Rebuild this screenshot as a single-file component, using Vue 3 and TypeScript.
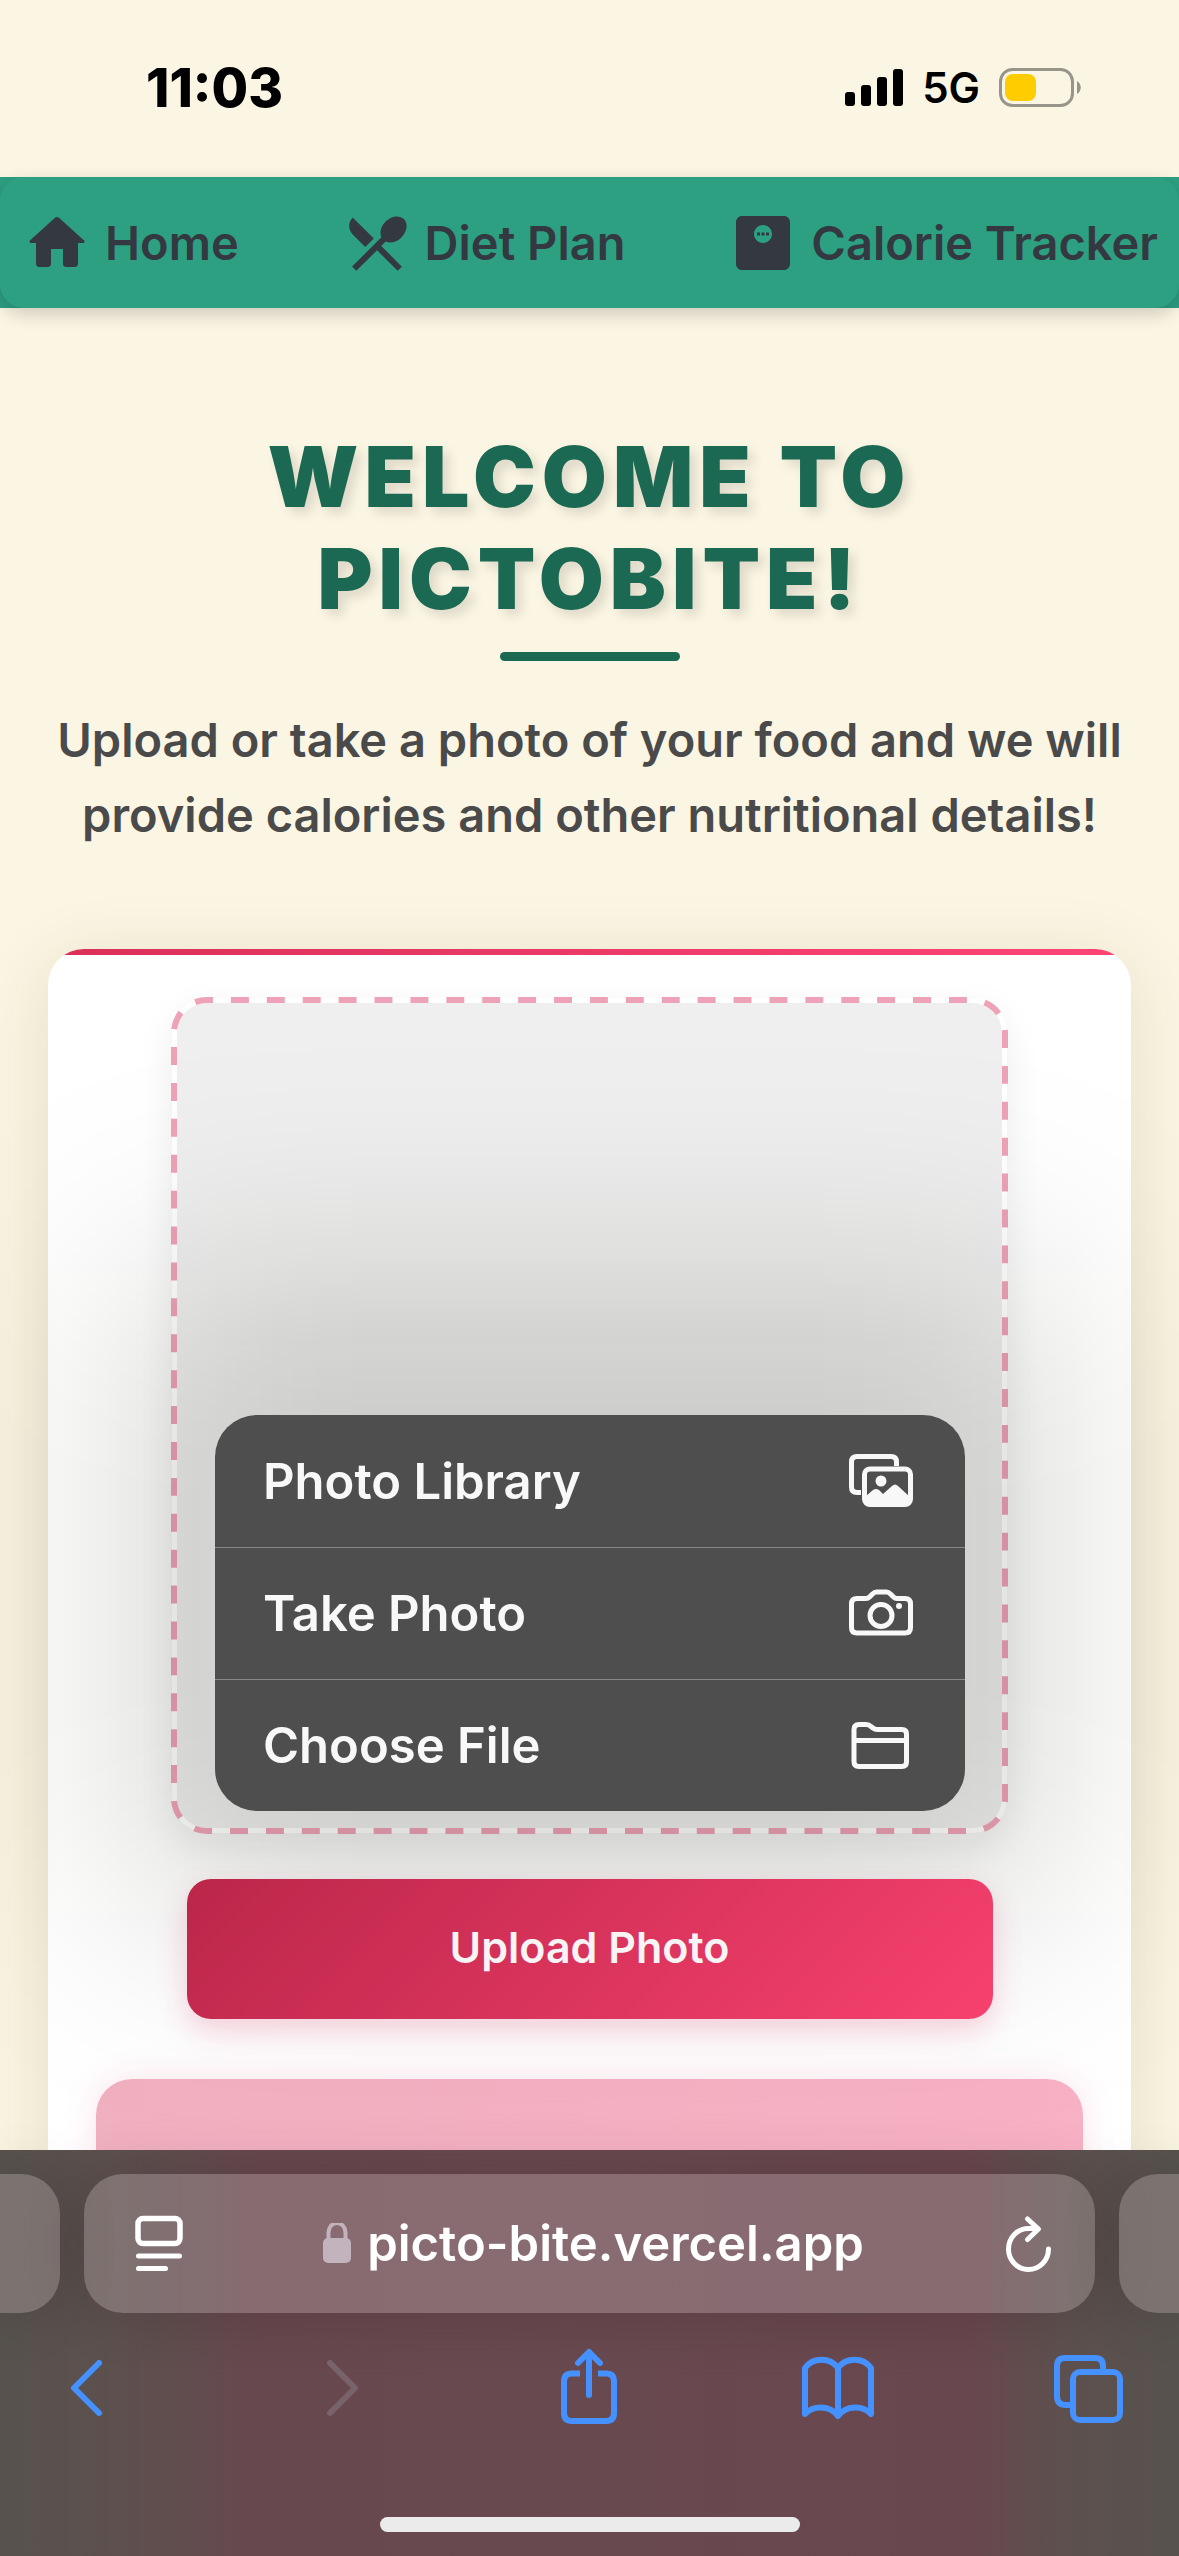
<script setup lang="ts">
interface NavItem {
  label: string
  icon: string
}

const navItems: NavItem[] = [
  {
    label: 'Home',
    icon: 'M10 19v-5h4v5c0 .55.45 1 1 1h3c.55 0 1-.45 1-1v-7h1.7c.46 0 .68-.57.33-.87L12.67 3.6c-.38-.34-.96-.34-1.34 0l-8.36 7.53c-.34.3-.13.87.33.87H5v7c0 .55.45 1 1 1h3c.55 0 1-.45 1-1z',
  },
  {
    label: 'Diet Plan',
    icon: 'M8.1 13.34l2.83-2.83L3.91 3.5c-1.56 1.56-1.56 4.09 0 5.66l4.19 4.18zm6.78-1.81c1.53.71 3.68.21 5.27-1.38 1.91-1.91 2.28-4.65.81-6.12-1.46-1.46-4.2-1.1-6.12.81-1.59 1.59-2.09 3.74-1.38 5.27L3.7 19.87l1.41 1.41L12 14.41l6.88 6.88 1.41-1.41L13.41 13l1.47-1.47z',
  },
  {
    label: 'Calorie Tracker',
    icon: 'M19 3H5c-1.1 0-2 .9-2 2v14c0 1.1.9 2 2 2h14c1.1 0 2-.9 2-2V5c0-1.1-.9-2-2-2zm-7 9c-1.66 0-3-1.34-3-3s1.34-3 3-3 3 1.34 3 3-1.34 3-3 3zM10 8.5h1v1h-1zM11.5 8.5h1v1h-1zM13 8.5h1v1h-1z',
  },
]
</script>

<template>
  <div class="screen">
    <div class="status">
      <span class="clock">11:03</span>
      <div class="status-right">
        <svg width="58" height="38" viewBox="0 0 58 38" aria-hidden="true">
          <rect x="0" y="23" width="10" height="14" rx="3" />
          <rect x="16" y="16" width="10" height="21" rx="3" />
          <rect x="32" y="8" width="10" height="29" rx="3" />
          <rect x="48" y="0" width="10" height="37" rx="3" />
        </svg>
        <span class="network">5G</span>
        <svg width="83" height="39" viewBox="0 0 83 39" aria-hidden="true">
          <rect x="1.5" y="1.5" width="72" height="36" rx="12" fill="none" stroke="#97948a" stroke-width="3" />
          <rect x="6" y="6" width="31" height="27" rx="8" fill="#ffcc00" />
          <path d="M78 13c5 3 5 10 0 13z" fill="#97948a" />
        </svg>
      </div>
    </div>

    <header class="header">
      <nav class="nav">
        <a v-for="item in navItems" :key="item.label" href="#" class="nav-link">
          <svg viewBox="0 0 24 24" width="72" height="72" aria-hidden="true">
            <path :d="item.icon" fill-rule="nonzero" />
          </svg>
          {{ item.label }}
        </a>
      </nav>
    </header>

    <main class="page">
      <h1 class="title">Welcome to<br />PictoBite!</h1>
      <div class="rule"></div>
      <p class="intro">Upload or take a photo of your food and we will provide calories and other nutritional details!</p>

      <section class="card">
        <div class="drop">
          <svg class="dashes" aria-hidden="true">
            <rect class="dash-rect" rx="33" pathLength="3276" />
          </svg>
          <div class="menu-shade"></div>
          <div class="menu" role="menu">
            <button type="button" class="menu-item" role="menuitem">
              Photo Library
              <svg width="66" height="56" viewBox="0 0 66 56" fill="none" aria-hidden="true">
                <path d="M13 39.500H9q-5.500 0-5.500-5.500V9q0-5.500 5.500-5.500H43q5.500 0 5.500 5.500v4" stroke="#f8f8f8" stroke-width="5" />
                <rect x="16.500" y="16" width="46" height="35.500" rx="5.500" stroke="#f8f8f8" stroke-width="5" />
                <circle cx="33" cy="28" r="5.500" fill="#f8f8f8" />
                <path d="M18 43l7-6q3-2 6 0l4 4 9-8q3-3 6 0l12 11v6q0 3-3 3H21q-3 0-3-3z" fill="#f8f8f8" />
              </svg>
            </button>
            <button type="button" class="menu-item" role="menuitem">
              Take Photo
              <svg width="66" height="56" viewBox="0 0 66 56" fill="none" aria-hidden="true">
                <path d="M9 12.500h9q2 0 3.500-1.500l3-3q2-2 4-2h10q2 0 4 2l3 3q1.500 1.500 3.500 1.500h8q5.500 0 5.500 5.500v23.500q0 5.500-5.500 5.500H9q-5.500 0-5.500-5.500V18q0-5.500 5.500-5.500z" stroke="#f8f8f8" stroke-width="5" />
                <circle cx="33" cy="29.500" r="11" stroke="#f8f8f8" stroke-width="5" />
                <circle cx="51" cy="20" r="3" fill="#f8f8f8" />
              </svg>
            </button>
            <button type="button" class="menu-item" role="menuitem">
              Choose File
              <svg width="66" height="56" viewBox="0 0 66 56" fill="none" aria-hidden="true">
                <path d="M11 6.500h7q3 0 5 2l2 1.500q2 1.500 4 1.500h25q4.500 0 4.500 4.500v28q0 4.500-4.500 4.500H11q-5 0-5-5V11.500q0-5 5-5zM6 22.500H58" stroke="#f8f8f8" stroke-width="5" />
              </svg>
            </button>
          </div>
        </div>
        <button type="button" class="upload">Upload Photo</button>
        <div class="result"></div>
      </section>
    </main>

    <footer class="browser">
      <div class="tabs">
        <div class="tab tab-prev"></div>
        <div class="tab address">
          <button type="button" class="icon-button" aria-label="Page menu">
            <svg width="48" height="58" viewBox="0 0 48 58" fill="none" stroke="#fff" aria-hidden="true">
              <rect x="3" y="3.500" width="42" height="25" rx="5" stroke-width="5.500" />
              <path d="M3.500 41h41M3.500 53.500h27" stroke-width="5" stroke-linecap="round" />
            </svg>
          </button>
          <button type="button" class="url">
            <svg width="28" height="42" viewBox="0 0 28 42" aria-hidden="true">
              <rect x="0" y="15" width="28" height="25" rx="5" fill="#c3b3bc" />
              <path d="M5.500 16v-6.500a8.500 9.500 0 0 1 17 0V16" fill="none" stroke="#c3b3bc" stroke-width="4" />
            </svg>
            picto-bite.vercel.app
          </button>
          <button type="button" class="icon-button" aria-label="Reload">
            <svg width="48" height="58" viewBox="0 0 48 58" fill="none" stroke="#fff" stroke-width="5" stroke-linecap="round" stroke-linejoin="round" aria-hidden="true">
              <path d="M44.500 34a20 20.500 0 1 1-20-20.500h9" />
              <path d="M23.500 4l11 10-11 10.500" />
            </svg>
          </button>
        </div>
        <div class="tab tab-next"></div>
      </div>

      <div class="toolbar">
        <button type="button" class="icon-button" aria-label="Back">
          <svg width="78" height="78" viewBox="0 0 78 78" aria-hidden="true">
            <path d="M51 14L26 39l25 25" />
          </svg>
        </button>
        <button type="button" class="icon-button dim" aria-label="Forward" disabled>
          <svg width="78" height="78" viewBox="0 0 78 78" aria-hidden="true">
            <path d="M32 14l25 25-25 25" />
          </svg>
        </button>
        <button type="button" class="icon-button" aria-label="Share">
          <svg width="78" height="78" viewBox="0 0 78 78" aria-hidden="true">
            <path d="M31 24.500h-8q-8 0-8 8V64q0 8 8 8h34q8 0 8-8V32.500q0-8-8-8h-8" stroke-linecap="butt" />
            <path d="M40 46V3M29 14L40 3l11 11" />
          </svg>
        </button>
        <button type="button" class="icon-button" aria-label="Bookmarks">
          <svg width="78" height="78" viewBox="0 0 78 78" aria-hidden="true">
            <path d="M39 19C31 8 14 8 6 19v46c8-9 25-9 33 2 8-11 25-11 33-2V19C64 8 47 8 39 19zM39 19v48" />
          </svg>
        </button>
        <button type="button" class="icon-button" aria-label="Tabs">
          <svg width="78" height="78" viewBox="0 0 78 78" aria-hidden="true">
            <path d="M21 56h-4q-9 0-9-9V17q0-8 8-8h30q8 0 8 8v5" stroke-linecap="butt" />
            <rect x="24" y="23" width="47" height="48" rx="7" />
          </svg>
        </button>
      </div>
      <div class="home-bar"></div>
    </footer>
  </div>
</template>

<style>
body {
  background: #fbf5e3;
}
</style>

<style scoped>
.screen {
  display: flex;
  flex-direction: column;
  height: 100vh;
  overflow: hidden;
  background: #fbf5e3;
  font-family: Inter, "Liberation Sans", sans-serif;
}

button {
  border: 0;
  background: none;
  padding: 0;
  font: inherit;
  color: inherit;
}

svg {
  display: block;
  flex: none;
}

.status {
  flex: none;
  display: flex;
  align-items: center;
  justify-content: space-between;
  height: 177px;
  padding: 0 97px 2px 146px;
  box-sizing: border-box;
  color: #000;
}

.clock {
  font-size: 53px;
  font-weight: 800;
}

.status-right {
  display: flex;
  align-items: center;
  gap: 19px;
}

.network {
  font-size: 42px;
  font-weight: 600;
}

.header {
  position: relative;
  z-index: 1;
  flex: none;
  background: #2d9f82;
}

.nav {
  display: flex;
  align-items: center;
  justify-content: space-between;
  height: 131px;
  padding: 0 21px;
  border-radius: 24px;
  background: #2da082;
  box-shadow: 0 6px 18px rgba(0, 0, 0, 0.18);
}

.nav-link {
  display: flex;
  align-items: center;
  gap: 12px;
  color: #343841;
  font-size: 47px;
  font-weight: 600;
  text-decoration: none;
  white-space: nowrap;
}

.nav-link svg {
  fill: currentColor;
}

.page {
  flex: 1;
  min-height: 0;
  overflow: hidden;
  display: flex;
  flex-direction: column;
  align-items: center;
  padding: 118px 48px 0;
}

.title {
  margin: 0;
  color: #1b6953;
  font-size: 84px;
  font-weight: 900;
  line-height: 102px;
  letter-spacing: 6px;
  text-align: center;
  text-transform: uppercase;
  text-shadow: 6px 6px 12px rgba(0, 0, 0, 0.12);
}

.rule {
  flex: none;
  width: 180px;
  height: 9px;
  margin-top: 22px;
  border-radius: 6px;
  background: #1b6953;
}

.intro {
  margin: 41px 0 97px;
  color: #4a4a4a;
  font-size: 47px;
  font-weight: 600;
  line-height: 75px;
  text-align: center;
}

.card {
  flex: none;
  position: relative;
  align-self: stretch;
  display: flex;
  flex-direction: column;
  align-items: center;
  padding: 48px;
  border-radius: 36px;
  background: linear-gradient(90deg, #d9305a, #ff4475) top / 100% 6px no-repeat, #fff;
  box-shadow: 0 12px 72px rgba(60, 60, 0, 0.12);
}

.drop {
  position: relative;
  z-index: 1;
  width: min(100%, 837px);
  aspect-ratio: 1;
  box-sizing: border-box;
  border: 6px solid transparent;
  border-radius: 36px;
  background: #efefef padding-box;
  box-shadow: 0 12px 36px rgba(0, 0, 0, 0.07);
}

.dashes {
  position: absolute;
  inset: -6px;
  width: calc(100% + 12px);
  height: calc(100% + 12px);
}

.dash-rect {
  x: 3px;
  y: 3px;
  width: calc(100% - 6px);
  height: calc(100% - 6px);
  fill: none;
  stroke: #eea2b7;
  stroke-width: 6px;
  stroke-dasharray: 18 18;
  stroke-dashoffset: 12;
}

/* Wide soft shadow that the open menu casts over the whole page */
.menu-shade {
  position: absolute;
  inset: 270px -48px -84px;
  background: rgba(10, 10, 0, 0.16);
  filter: blur(110px);
  pointer-events: none;
}

.menu {
  position: absolute;
  left: 38px;
  right: 37px;
  bottom: 17px;
  border-radius: 42px;
  background: #4e4e4e;
  color: #f8f8f8;
}

.menu-item {
  display: flex;
  align-items: center;
  justify-content: space-between;
  width: 100%;
  height: 132px;
  padding: 0 51px 0 48px;
  font-size: 49px;
  font-weight: 600;
}

.menu-item + .menu-item {
  border-top: 1px solid #888;
}

.upload {
  position: relative;
  z-index: 2;
  width: min(100%, 806px);
  height: 140px;
  margin-top: 45px;
  padding-bottom: 4px;
  border-radius: 24px;
  background: linear-gradient(135deg, #bb2649, #f7416f);
  box-shadow: 0 12px 30px rgba(220, 40, 90, 0.2);
  color: #f8f4f5;
  font-size: 43px;
  font-weight: 600;
}

.result {
  align-self: stretch;
  height: 600px;
  margin-top: 60px;
  border-radius: 36px;
  background: linear-gradient(100deg, #f1b0c0, #f9b1c5);
  box-shadow: 0 0 36px rgba(220, 40, 90, 0.12);
}

.browser {
  position: relative;
  z-index: 2;
  flex: none;
  padding: 24px 0;
  background: linear-gradient(90deg, #57524d, #5d504e 10%, #67484e 22%, #68494f 50%, #69474e 82%, #5d504e 90%, #57524d);
}

.tabs {
  display: flex;
  gap: 24px;
  height: 139px;
}

.tab {
  background: rgba(255, 240, 245, 0.21);
  box-shadow: 0 0 60px rgba(20, 0, 0, 0.16);
}

.tab-prev,
.tab-next {
  flex: 0 0 60px;
  border-radius: 0 39px 39px 0;
}

.tab-next {
  border-radius: 39px 0 0 39px;
}

.address {
  flex: 1;
  display: flex;
  align-items: center;
  justify-content: space-between;
  padding: 0 43px 0 51px;
  border-radius: 39px;
  color: #fff;
}

.url {
  display: flex;
  align-items: center;
  gap: 16px;
  font-size: 49px;
  font-weight: 600;
}

.toolbar {
  display: flex;
  align-items: center;
  justify-content: space-between;
  padding: 36px 52px 0 48px;
}

.icon-button svg {
  overflow: visible;
}

.toolbar svg {
  fill: none;
  stroke: #4491ff;
  stroke-width: 6px;
  stroke-linecap: round;
  stroke-linejoin: round;
}

.toolbar .dim svg {
  stroke: #78636a;
}

.home-bar {
  width: 420px;
  height: 15px;
  margin: 90px auto 0;
  border-radius: 8px;
  background: #ebebeb;
}
</style>
